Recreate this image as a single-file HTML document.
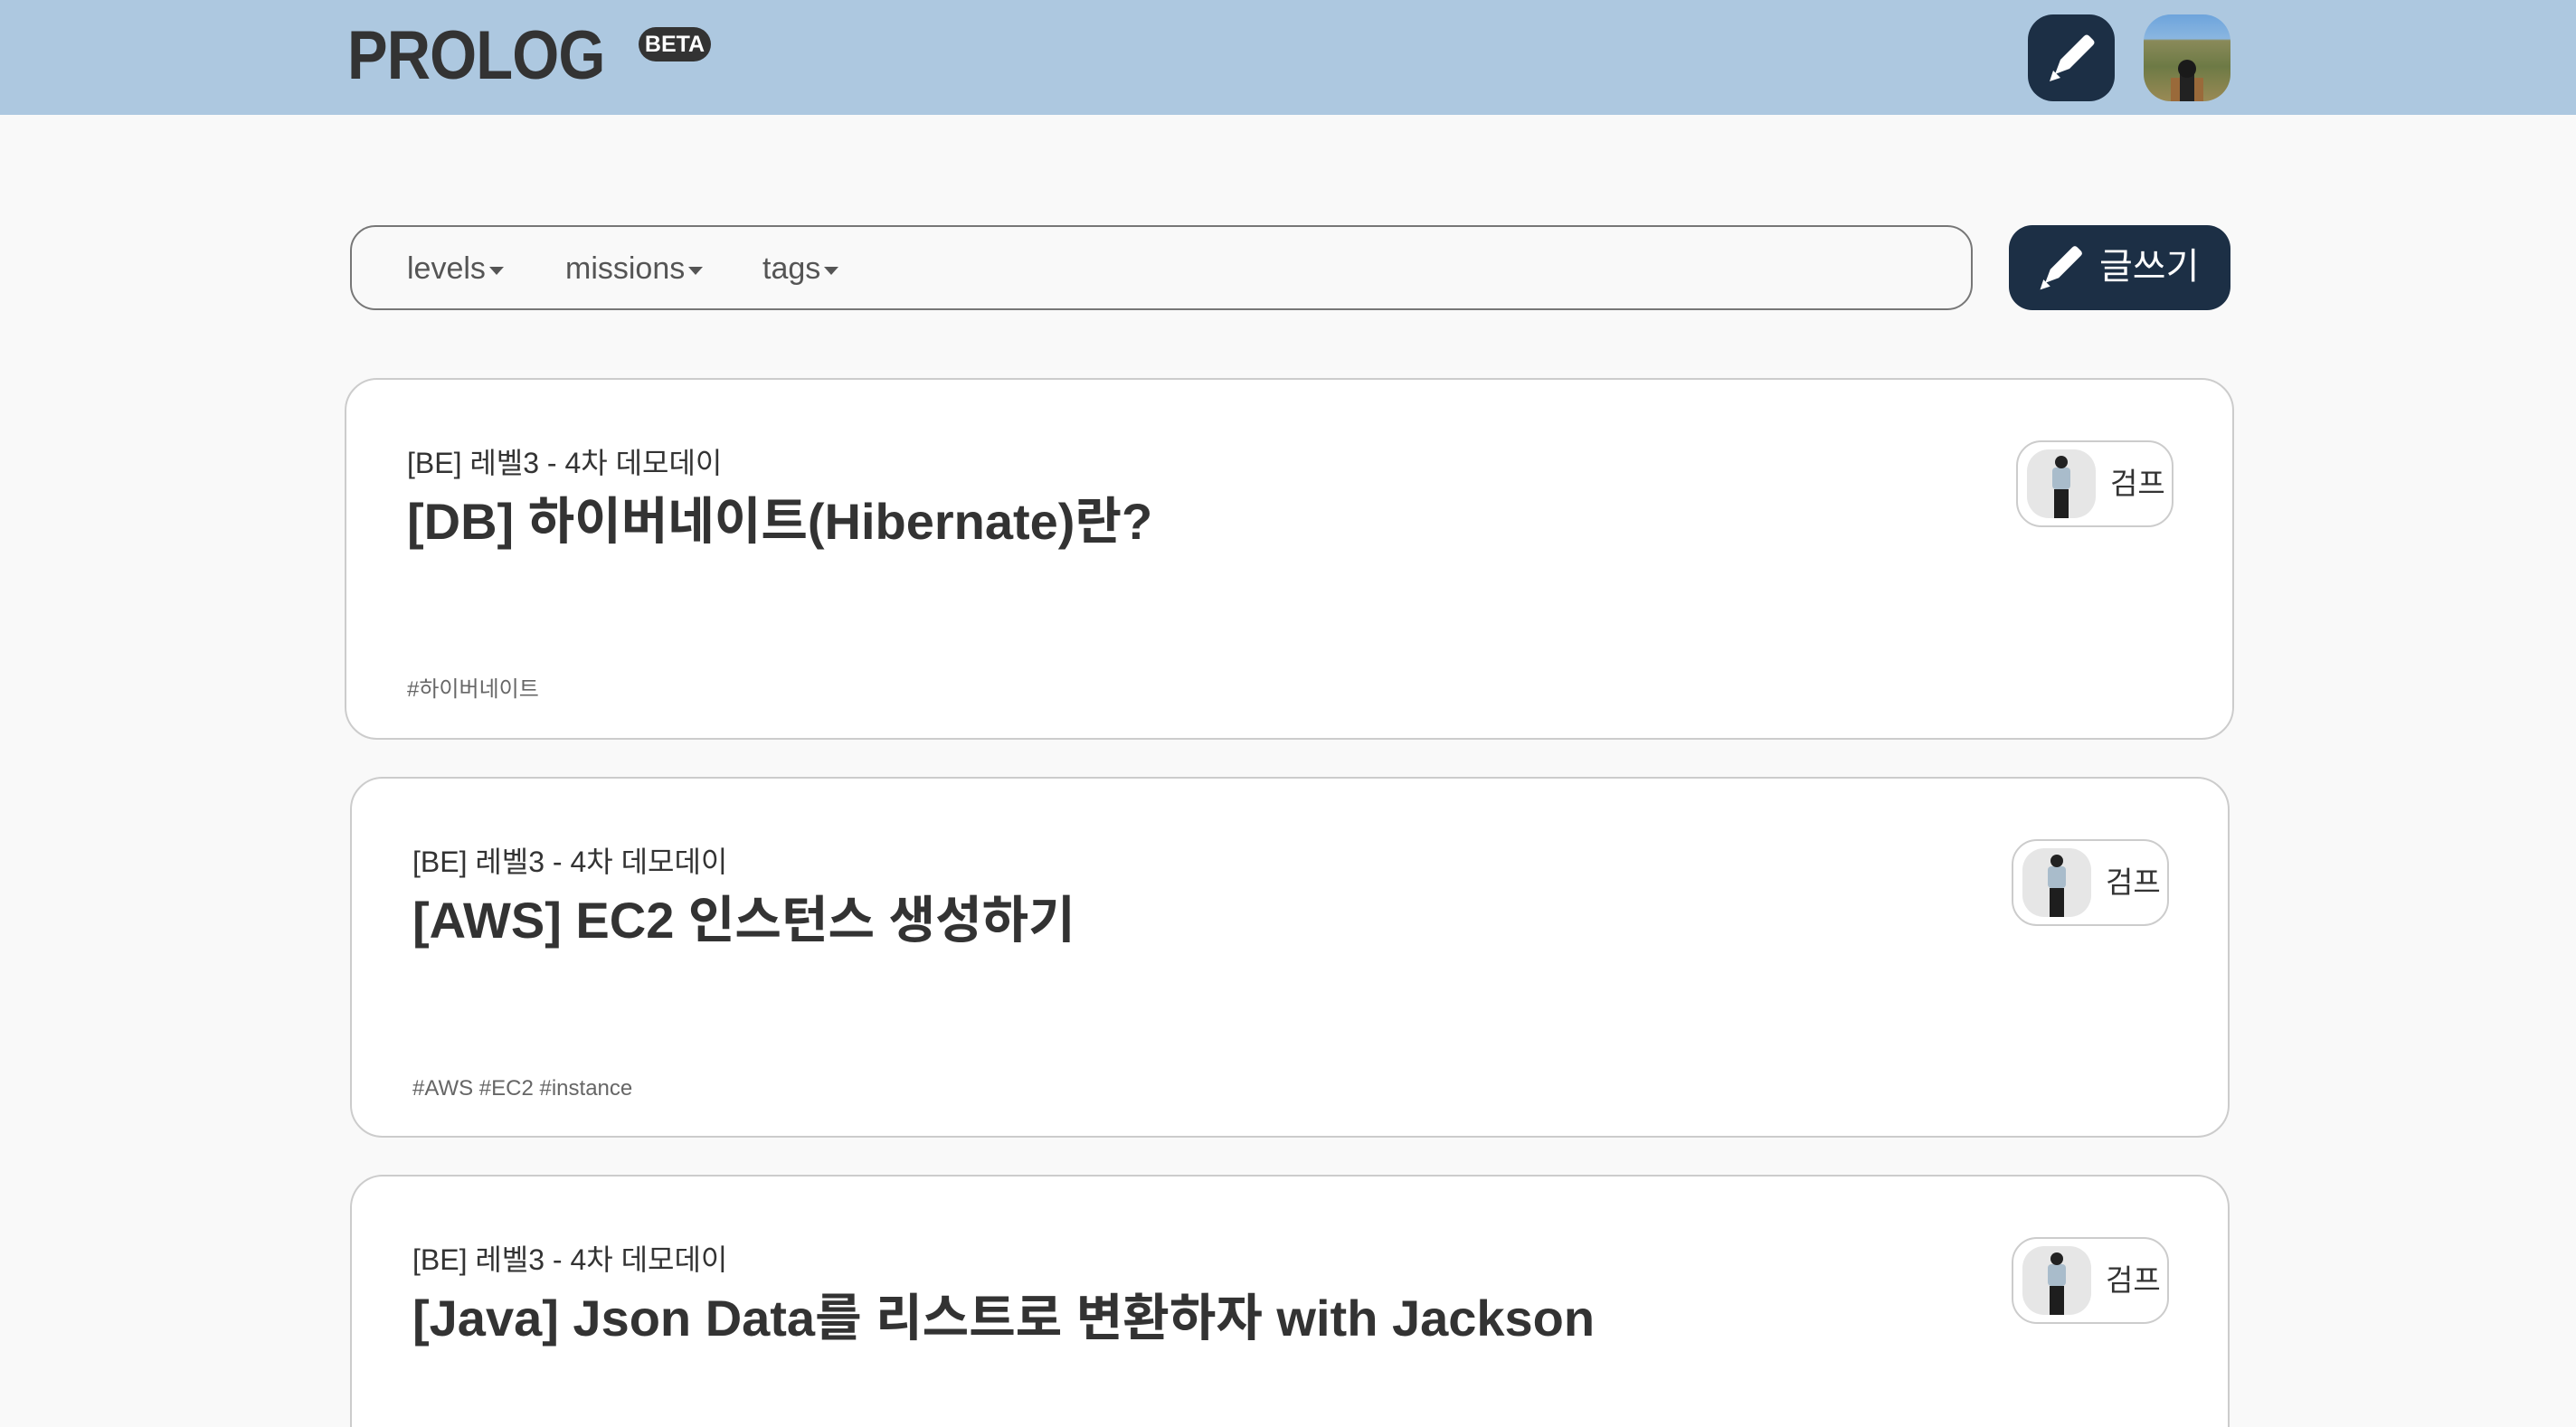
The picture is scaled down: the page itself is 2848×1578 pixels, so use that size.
<!DOCTYPE html>
<html><head><meta charset="utf-8"><style>
*{margin:0;padding:0;box-sizing:border-box}
html{height:1578px;overflow:hidden}
body{width:2848px;height:1578px;overflow:hidden;background:#f9f9f9;font-family:"Liberation Sans","Noto Sans CJK KR",sans-serif;position:relative;color:#333}
.hdr{position:absolute;left:0;top:0;width:2848px;height:127px;background:#adc8e0}
.logo{position:absolute;left:384px;top:22px;font-size:76px;font-weight:bold;color:#333;letter-spacing:-1px;line-height:80px;transform:scaleX(0.88);transform-origin:left}
.beta{position:absolute;left:706px;top:30px;width:80px;height:38px;border-radius:19px;background:#333;color:#fff;font-size:25px;font-weight:bold;line-height:38px;text-align:center}
.ebtn{position:absolute;left:2242px;top:16px;width:96px;height:96px;border-radius:28px;background:#1c2f45}
.av{position:absolute;left:2370px;top:16px;width:96px;height:96px;border-radius:30px;overflow:hidden;background:linear-gradient(#6da4dc 0%,#8ab6e0 28%,#8a8a5a 30%,#6d7a45 60%,#9a8a55 100%)}
.filter{position:absolute;left:387px;top:249px;width:1794px;height:94px;border:2px solid #777;border-radius:28px}
.f{position:absolute;top:274px;font-size:34px;color:#555;line-height:46px}
.f:after{content:"";display:inline-block;margin-left:4px;border-left:8px solid transparent;border-right:8px solid transparent;border-top:9px solid #555;vertical-align:middle}
.wbtn{position:absolute;left:2221px;top:249px;width:245px;height:94px;border-radius:26px;background:#1c2f45;color:#fff;font-size:40px}
.wbtn span{position:absolute;left:100px;top:20px;line-height:52px}
.card{position:absolute;background:#fff;border:2px solid #ccc;border-radius:36px}
.lv{position:absolute;left:67px;font-size:32px;color:#333;line-height:40px}
.tt{position:absolute;left:67px;font-size:56px;font-weight:bold;color:#333;line-height:70px;white-space:nowrap}
.tg{position:absolute;left:67px;font-size:24px;color:#666;line-height:30px}
.pill{position:absolute;width:174px;height:96px;border:2px solid #ccc;border-radius:28px;background:#fff}
.pill .pa{position:absolute;left:10px;top:8px;width:76px;height:76px;border-radius:24px;background:#e6e6e6;overflow:hidden}
.pill .nm{position:absolute;left:102px;top:26px;font-size:33px;line-height:40px;color:#333}
</style></head><body>
<div class="hdr">
 <div class="logo">PROLOG</div>
 <div class="beta">BETA</div>
 <div class="ebtn"><svg width="96" height="96" viewBox="0 0 96 96"><path d="M30 66 L36 50 L62 24 Q65 21 68 24 L72 28 Q75 31 72 34 L46 60 Z" fill="#fff"/><path d="M24 74 L28 62 L36 70 Z" fill="#fff"/></svg></div>
 <div class="av"><svg width="96" height="96"><rect x="30" y="70" width="36" height="30" fill="#9a6a3a"/><rect x="40" y="66" width="16" height="34" fill="#222"/><circle cx="48" cy="60" r="10" fill="#1a1a1a"/></svg></div>
</div>
<div class="filter"></div>
<div class="f" style="left:450px">levels</div>
<div class="f" style="left:625px">missions</div>
<div class="f" style="left:843px">tags</div>
<div class="wbtn"><svg style="position:absolute;left:12px;top:2px" width="90" height="90" viewBox="0 0 96 96"><path d="M30 66 L36 50 L62 24 Q65 21 68 24 L72 28 Q75 31 72 34 L46 60 Z" fill="#fff"/><path d="M24 74 L28 62 L36 70 Z" fill="#fff"/></svg><span>글쓰기</span></div>

<div class="card" style="left:381px;top:418px;width:2089px;height:400px">
 <div class="lv" style="top:72px">[BE] 레벨3 - 4차 데모데이</div>
 <div class="tt" style="top:122px">[DB] 하이버네이트(Hibernate)란?</div>
 <div class="tg" style="top:328px">#하이버네이트</div>
 <div class="pill" style="left:1846px;top:67px"><div class="pa"><svg width="76" height="76"><rect x="28" y="20" width="20" height="24" rx="4" fill="#a9bccb"/><circle cx="38" cy="14" r="7" fill="#222"/><rect x="30" y="44" width="16" height="32" fill="#1e1e1e"/></svg></div><div class="nm">검프</div></div>
</div>
<div class="card" style="left:387px;top:859px;width:2078px;height:399px">
 <div class="lv" style="top:72px">[BE] 레벨3 - 4차 데모데이</div>
 <div class="tt" style="top:122px">[AWS] EC2 인스턴스 생성하기</div>
 <div class="tg" style="top:328px">#AWS #EC2 #instance</div>
 <div class="pill" style="left:1835px;top:67px"><div class="pa"><svg width="76" height="76"><rect x="28" y="20" width="20" height="24" rx="4" fill="#a9bccb"/><circle cx="38" cy="14" r="7" fill="#222"/><rect x="30" y="44" width="16" height="32" fill="#1e1e1e"/></svg></div><div class="nm">검프</div></div>
</div>
<div class="card" style="left:387px;top:1299px;width:2078px;height:300px;border-bottom:none;border-radius:36px 36px 0 0">
 <div class="lv" style="top:72px">[BE] 레벨3 - 4차 데모데이</div>
 <div class="tt" style="top:122px">[Java] Json Data를 리스트로 변환하자 with Jackson</div>
 <div class="pill" style="left:1835px;top:67px"><div class="pa"><svg width="76" height="76"><rect x="28" y="20" width="20" height="24" rx="4" fill="#a9bccb"/><circle cx="38" cy="14" r="7" fill="#222"/><rect x="30" y="44" width="16" height="32" fill="#1e1e1e"/></svg></div><div class="nm">검프</div></div>
</div>
</body></html>
